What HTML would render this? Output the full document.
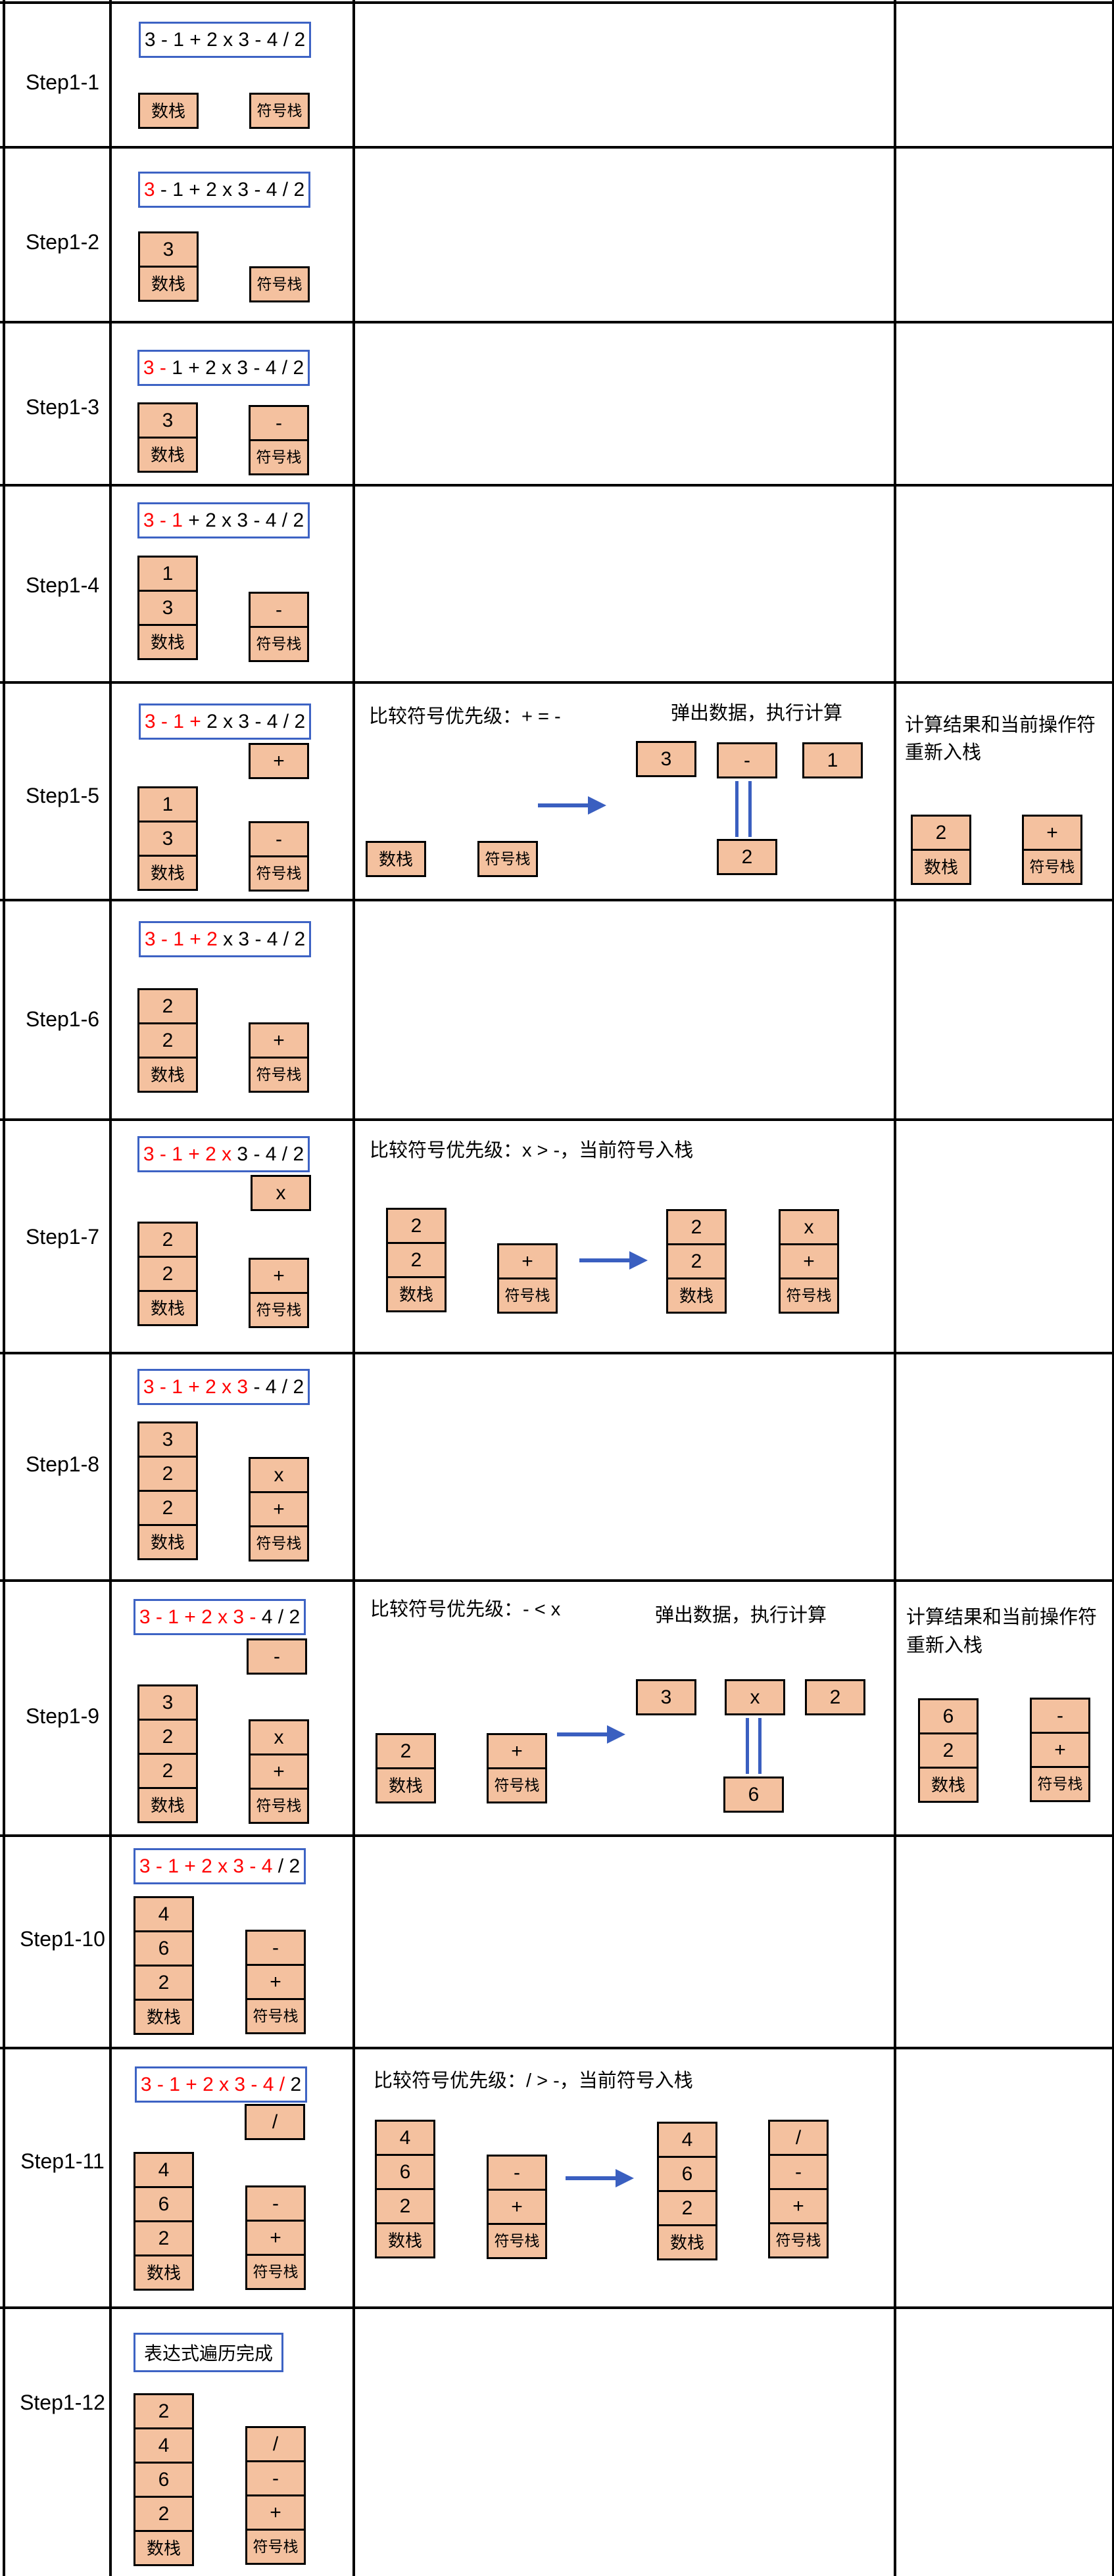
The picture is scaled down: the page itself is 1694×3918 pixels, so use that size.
<!DOCTYPE html>
<html><head><meta charset="utf-8">
<style>
html,body{margin:0;padding:0;background:#fff}
body{width:1694px;height:3918px;position:relative;overflow:hidden;font-family:"Liberation Sans","Noto Sans CJK SC",sans-serif;color:#000}
.h{position:absolute;left:0;width:1694px;height:4px;background:#000}
.v{position:absolute;top:0;width:4px;height:3918px;background:#000}
.lb{position:absolute;left:15px;width:160px;text-align:center;font-size:32px;line-height:36px}
.st{position:absolute;width:92px}
.st>div{height:55px;box-sizing:border-box;border:3px solid #000;background:#f4c19f;margin-top:-3px;display:flex;align-items:center;justify-content:center;font-size:30px;line-height:1}
.st>div:first-child{margin-top:0}
.st>div.n{font-size:26px}
.st>div.s{font-size:23px}
.ex{position:absolute;width:262px;height:55px;border:3px solid #3d63c4;box-sizing:border-box;display:flex;align-items:center;justify-content:center;font-size:30px;white-space:pre;background:#fff}
.r{color:#ff0000}
.t{position:absolute;font-size:29px;line-height:32px;white-space:nowrap}
.dl{position:absolute;width:5px;background:#3a5fc0}
svg.ar{position:absolute}
</style></head><body>

<div class="h" style="top:2px"></div>
<div class="h" style="top:222px"></div>
<div class="h" style="top:488px"></div>
<div class="h" style="top:736px"></div>
<div class="h" style="top:1036px"></div>
<div class="h" style="top:1367px"></div>
<div class="h" style="top:1701px"></div>
<div class="h" style="top:2056px"></div>
<div class="h" style="top:2402px"></div>
<div class="h" style="top:2790px"></div>
<div class="h" style="top:3113px"></div>
<div class="h" style="top:3508px"></div>
<div class="v" style="left:4px"></div>
<div class="v" style="left:166px"></div>
<div class="v" style="left:536px"></div>
<div class="v" style="left:1359px"></div>
<div class="v" style="left:1691px;width:3px"></div>

<div class="lb" style="top:107px">Step1-1</div>
<div class="lb" style="top:350px">Step1-2</div>
<div class="lb" style="top:601px">Step1-3</div>
<div class="lb" style="top:872px">Step1-4</div>
<div class="lb" style="top:1192px">Step1-5</div>
<div class="lb" style="top:1532px">Step1-6</div>
<div class="lb" style="top:1863px">Step1-7</div>
<div class="lb" style="top:2209px">Step1-8</div>
<div class="lb" style="top:2592px">Step1-9</div>
<div class="lb" style="top:2931px">Step1-10</div>
<div class="lb" style="top:3269px">Step1-11</div>
<div class="lb" style="top:3636px">Step1-12</div>

<div class="ex" style="left:211px;top:33px">3 - 1 + 2 x 3 - 4 / 2</div>
<div class="st" style="left:210px;top:141px"><div class="n">数栈</div></div>
<div class="st" style="left:379px;top:141px"><div class="s">符号栈</div></div>

<div class="ex" style="left:210px;top:261px"><span class="r">3</span> - 1 + 2 x 3 - 4 / 2</div>
<div class="st" style="left:210px;top:352px"><div>3</div><div class="n">数栈</div></div>
<div class="st" style="left:379px;top:405px"><div class="s">符号栈</div></div>

<div class="ex" style="left:209px;top:532px"><span class="r">3 -</span> 1 + 2 x 3 - 4 / 2</div>
<div class="st" style="left:209px;top:612px"><div>3</div><div class="n">数栈</div></div>
<div class="st" style="left:378px;top:616px"><div>-</div><div class="s">符号栈</div></div>

<div class="ex" style="left:209px;top:764px"><span class="r">3 - 1</span> + 2 x 3 - 4 / 2</div>
<div class="st" style="left:209px;top:845px"><div>1</div><div>3</div><div class="n">数栈</div></div>
<div class="st" style="left:378px;top:900px"><div>-</div><div class="s">符号栈</div></div>

<div class="ex" style="left:211px;top:1070px"><span class="r">3 - 1 +</span> 2 x 3 - 4 / 2</div>
<div class="st" style="left:378px;top:1130px"><div>+</div></div>
<div class="st" style="left:209px;top:1196px"><div>1</div><div>3</div><div class="n">数栈</div></div>
<div class="st" style="left:378px;top:1249px"><div>-</div><div class="s">符号栈</div></div>

<div class="t" style="left:561px;top:1074px">比较符号优先级：+ = -</div>
<div class="t" style="left:1020px;top:1069px">弹出数据，执行计算</div>
<div class="st" style="left:967px;top:1127px"><div>3</div></div>
<div class="st" style="left:1090px;top:1129px"><div>-</div></div>
<div class="st" style="left:1220px;top:1129px"><div>1</div></div>
<div class="dl" style="left:1118px;top:1188px;height:85px"></div>
<div class="dl" style="left:1138px;top:1188px;height:85px"></div>
<div class="st" style="left:1090px;top:1276px"><div>2</div></div>
<svg class="ar" style="left:818px;top:1211px" width="104" height="28"><rect x="0" y="11" width="78" height="6" fill="#3a5fc0"/><polygon points="76,0 104,14 76,28" fill="#3a5fc0"/></svg>
<div class="st" style="left:556px;top:1279px"><div class="n">数栈</div></div>
<div class="st" style="left:726px;top:1279px"><div class="s">符号栈</div></div>

<div class="t" style="left:1376px;top:1082px;line-height:42px">计算结果和当前操作符<br>重新入栈</div>
<div class="st" style="left:1385px;top:1239px"><div>2</div><div class="n">数栈</div></div>
<div class="st" style="left:1554px;top:1239px"><div>+</div><div class="s">符号栈</div></div>

<div class="ex" style="left:211px;top:1401px"><span class="r">3 - 1 + 2</span> x 3 - 4 / 2</div>
<div class="st" style="left:209px;top:1503px"><div>2</div><div>2</div><div class="n">数栈</div></div>
<div class="st" style="left:378px;top:1555px"><div>+</div><div class="s">符号栈</div></div>

<div class="ex" style="left:209px;top:1728px"><span class="r">3 - 1 + 2 x</span> 3 - 4 / 2</div>
<div class="st" style="left:381px;top:1787px"><div>x</div></div>
<div class="st" style="left:209px;top:1858px"><div>2</div><div>2</div><div class="n">数栈</div></div>
<div class="st" style="left:378px;top:1913px"><div>+</div><div class="s">符号栈</div></div>

<div class="t" style="left:562px;top:1734px">比较符号优先级：x &gt; -，当前符号入栈</div>
<div class="st" style="left:587px;top:1837px"><div>2</div><div>2</div><div class="n">数栈</div></div>
<div class="st" style="left:756px;top:1891px"><div>+</div><div class="s">符号栈</div></div>
<svg class="ar" style="left:881px;top:1903px" width="104" height="28"><rect x="0" y="11" width="78" height="6" fill="#3a5fc0"/><polygon points="76,0 104,14 76,28" fill="#3a5fc0"/></svg>
<div class="st" style="left:1013px;top:1839px"><div>2</div><div>2</div><div class="n">数栈</div></div>
<div class="st" style="left:1184px;top:1839px"><div>x</div><div>+</div><div class="s">符号栈</div></div>

<div class="ex" style="left:209px;top:2082px"><span class="r">3 - 1 + 2 x 3</span> - 4 / 2</div>
<div class="st" style="left:209px;top:2162px"><div>3</div><div>2</div><div>2</div><div class="n">数栈</div></div>
<div class="st" style="left:378px;top:2216px"><div>x</div><div>+</div><div class="s">符号栈</div></div>

<div class="ex" style="left:203px;top:2432px"><span class="r">3 - 1 + 2 x 3 -</span> 4 / 2</div>
<div class="st" style="left:375px;top:2492px"><div>-</div></div>
<div class="st" style="left:209px;top:2562px"><div>3</div><div>2</div><div>2</div><div class="n">数栈</div></div>
<div class="st" style="left:378px;top:2615px"><div>x</div><div>+</div><div class="s">符号栈</div></div>

<div class="t" style="left:563px;top:2432px">比较符号优先级：- &lt; x</div>
<div class="t" style="left:996px;top:2441px">弹出数据，执行计算</div>
<div class="st" style="left:967px;top:2554px"><div>3</div></div>
<div class="st" style="left:1102px;top:2554px"><div>x</div></div>
<div class="st" style="left:1224px;top:2554px"><div>2</div></div>
<div class="dl" style="left:1134px;top:2613px;height:85px"></div>
<div class="dl" style="left:1153px;top:2613px;height:85px"></div>
<div class="st" style="left:1100px;top:2702px"><div>6</div></div>
<svg class="ar" style="left:847px;top:2624px" width="104" height="28"><rect x="0" y="11" width="78" height="6" fill="#3a5fc0"/><polygon points="76,0 104,14 76,28" fill="#3a5fc0"/></svg>
<div class="st" style="left:571px;top:2636px"><div>2</div><div class="n">数栈</div></div>
<div class="st" style="left:740px;top:2636px"><div>+</div><div class="s">符号栈</div></div>

<div class="t" style="left:1378px;top:2439px;line-height:43px">计算结果和当前操作符<br>重新入栈</div>
<div class="st" style="left:1396px;top:2583px"><div>6</div><div>2</div><div class="n">数栈</div></div>
<div class="st" style="left:1566px;top:2582px"><div>-</div><div>+</div><div class="s">符号栈</div></div>

<div class="ex" style="left:203px;top:2811px"><span class="r">3 - 1 + 2 x 3 - 4</span> / 2</div>
<div class="st" style="left:203px;top:2884px"><div>4</div><div>6</div><div>2</div><div class="n">数栈</div></div>
<div class="st" style="left:373px;top:2935px"><div>-</div><div>+</div><div class="s">符号栈</div></div>

<div class="ex" style="left:205px;top:3143px"><span class="r">3 - 1 + 2 x 3 - 4 /</span> 2</div>
<div class="st" style="left:372px;top:3200px"><div>/</div></div>
<div class="st" style="left:203px;top:3273px"><div>4</div><div>6</div><div>2</div><div class="n">数栈</div></div>
<div class="st" style="left:373px;top:3324px"><div>-</div><div>+</div><div class="s">符号栈</div></div>

<div class="t" style="left:568px;top:3149px">比较符号优先级：/ &gt; -，当前符号入栈</div>
<div class="st" style="left:570px;top:3224px"><div>4</div><div>6</div><div>2</div><div class="n">数栈</div></div>
<div class="st" style="left:740px;top:3277px"><div>-</div><div>+</div><div class="s">符号栈</div></div>
<svg class="ar" style="left:860px;top:3299px" width="104" height="28"><rect x="0" y="11" width="78" height="6" fill="#3a5fc0"/><polygon points="76,0 104,14 76,28" fill="#3a5fc0"/></svg>
<div class="st" style="left:999px;top:3227px"><div>4</div><div>6</div><div>2</div><div class="n">数栈</div></div>
<div class="st" style="left:1168px;top:3224px"><div>/</div><div>-</div><div>+</div><div class="s">符号栈</div></div>

<div class="ex" style="left:203px;top:3548px;width:228px;height:60px;font-size:28px">表达式遍历完成</div>
<div class="st" style="left:203px;top:3640px"><div>2</div><div>4</div><div>6</div><div>2</div><div class="n">数栈</div></div>
<div class="st" style="left:373px;top:3690px"><div>/</div><div>-</div><div>+</div><div class="s">符号栈</div></div>

</body></html>
